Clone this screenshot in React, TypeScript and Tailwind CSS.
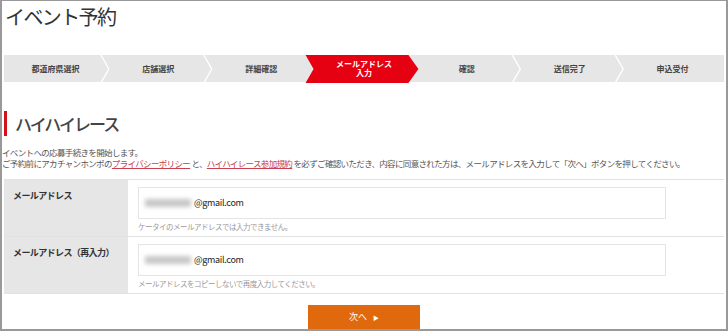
const steps = ["都道府県選択", "店舗選択", "詳細確認", "メールアドレス\n入力", "確認", "送信完了", "申込受付"];
const ACTIVE = 3;

function StepBar() {
  const w = 720 / steps.length;
  return (
    <div className="relative h-[28px] bg-[#e6e6e6]">
      <svg className="absolute inset-0" width="720" height="28" viewBox="0 0 720 28">
        {steps.slice(1).map((_, i) => {
          const b = w * (i + 1);
          if (i + 1 === ACTIVE || i + 1 === ACTIVE + 1) return null;
          return (
            <polyline
              key={i}
              points={`${b - 6},0 ${b + 2},14 ${b - 6},28`}
              fill="none"
              stroke="#ffffff"
              strokeWidth="1.4"
            />
          );
        })}
        <polygon
          points={`${w * ACTIVE - 7},0 ${w * (ACTIVE + 1) - 7},0 ${w * (ACTIVE + 1) + 3},14 ${w * (ACTIVE + 1) - 7},28 ${w * ACTIVE - 7},28 ${w * ACTIVE + 1},14`}
          fill="#e50012"
        />
      </svg>
      <div className="relative flex h-full">
        {steps.map((s, i) => (
          <div
            key={s}
            className={`flex-1 flex items-center justify-center text-center whitespace-pre-line text-[8px] leading-[9px] font-bold ${
              i === ACTIVE ? "text-white" : "text-[#444]"
            }`}
          >
            {s}
          </div>
        ))}
      </div>
    </div>
  );
}

function EmailRow({ label, note }: { label: string; note: string }) {
  return (
    <div className="flex h-[57px] border-b border-[#e2e2e2]">
      <div className="w-[124px] bg-[#e6e6e6] pl-[9px] pt-[9px] text-[9px] font-bold text-[#333] tracking-[-0.6px]">
        {label}
      </div>
      <div className="flex-1 pl-[10px] pt-[7px]">
        <div className="w-[528px] h-[32px] border border-[#e4e4e4] flex items-center pl-[6px]">
          <div className="w-[46px] h-[8px] bg-[#c8c8c8] blur-[2px] mr-[3px]" />
          <span className="text-[9px] text-[#222] tracking-[-0.3px]">@gmail.com</span>
        </div>
        <div className="mt-[2px] text-[7.5px] text-[#999] tracking-[-0.5px]">{note}</div>
      </div>
    </div>
  );
}

export default function App() {
  return (
    <div
      className="w-[728px] h-[331px] overflow-hidden bg-white border-l-[2px] border-r-[2px] border-t border-b-[2px] border-[#999] pl-[2px] pr-[2px] flex flex-col"
      style={{ fontFamily: '"Noto Sans CJK JP", "Noto Sans", sans-serif' }}
    >
      <h1 className="pl-[1px] pt-[3px] h-[55px] text-[20px] leading-[26px] text-[#333] tracking-[-1.6px]">イベント予約</h1>
      <StepBar />
      <div className="mt-[29px] h-[25px] border-l-[3px] border-[#d0121b] pl-[8px] flex items-center text-[17px] text-[#444] font-medium tracking-[-2px]">
        ハイハイレース
      </div>
      <div className="mt-[11px] -ml-[2px] text-[8.5px] leading-[11px] text-[#555] tracking-[-0.65px]">
        <p>イベントへの応募手続きを開始します。</p>
        <p>
          ご予約前にアカチャンホンポの
          <span className="text-[#c8404f] underline">プライバシーポリシー</span> と、
          <span className="text-[#c8404f] underline">ハイハイレース参加規約</span>{" "}
          を必ずご確認いただき、内容に同意された方は、メールアドレスを入力して「次へ」ボタンを押してください。
        </p>
      </div>
      <div className="mt-[10px] border-t border-[#e2e2e2]">
        <EmailRow label="メールアドレス" note="ケータイのメールアドレスでは入力できません。" />
        <EmailRow label="メールアドレス（再入力）" note="メールアドレスをコピーしないで再度入力してください。" />
      </div>
      <div className="flex justify-center mt-[11px]">
        <button className="w-[112px] h-[24px] bg-[#e0690e] text-white text-[9px] flex items-center justify-center gap-[6px]">
          次へ
          <span className="text-[6px]">▶</span>
        </button>
      </div>
    </div>
  );
}
